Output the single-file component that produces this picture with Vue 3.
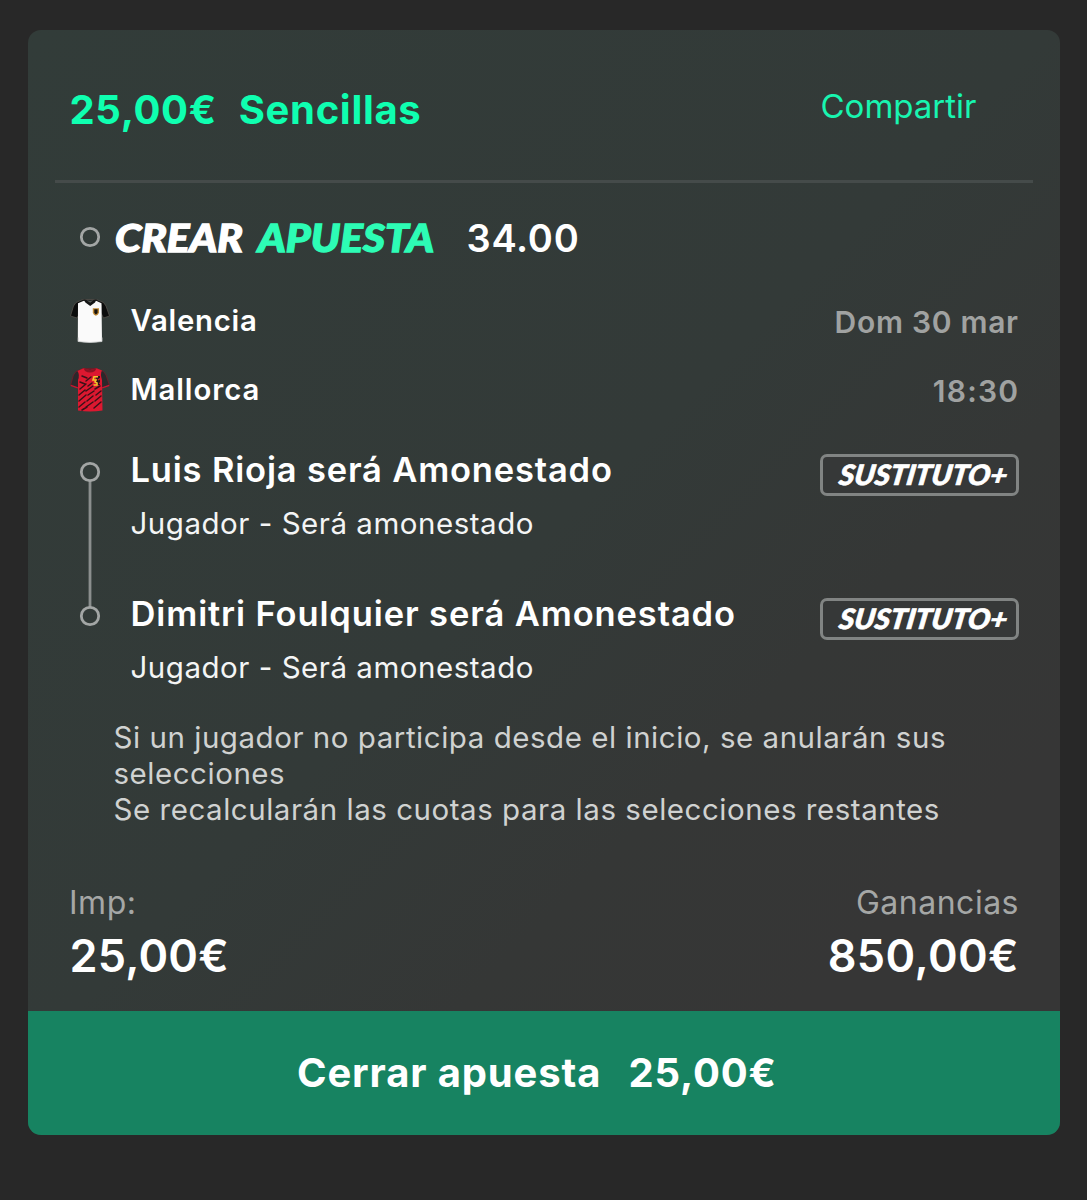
<script setup>
const teams = [
  { name: 'Valencia', kit: 'white', when: 'Dom 30 mar', nameGap: 0.75, whenGap: 0.7 },
  { name: 'Mallorca', kit: 'red', when: '18:30', nameGap: 0.95, whenGap: 1.2 },
]
const legs = [
  { title: 'Luis Rioja será Amonestado', market: 'Jugador - Será amonestado', gap: 0.82 },
  { title: 'Dimitri Foulquier será Amonestado', market: 'Jugador - Será amonestado', gap: 0.88 },
]
</script>

<template>
  <main class="page">
    <article class="card">
      <header class="head">
        <span class="stake">25,00€</span>
        <span class="type">Sencillas</span>
        <a class="share">Compartir</a>
      </header>
      <div class="rule"></div>

      <div class="builder">
        <svg class="ring" width="22" height="22" viewBox="0 0 22 22"><circle cx="11" cy="11" r="8.7" /></svg>
        <svg class="logo" width="324" height="40" viewBox="0 0 324 40">
          <text x="1" y="33.500" textLength="128" lengthAdjust="spacingAndGlyphs" fill="#fff" stroke="#fff">CREAR</text>
          <text x="144" y="33.500" textLength="176" lengthAdjust="spacingAndGlyphs" fill="#2dfcb5" stroke="#2dfcb5">APUESTA</text>
        </svg>
        <span class="odds">34.00</span>
      </div>

      <div v-for="t in teams" :key="t.name" class="team">
        <svg v-if="t.kit === 'white'" class="kit" width="40" height="46" viewBox="0 0 40 46">
          <path d="M13 1.500 6 4.500 3.500 8 .5 18l6.500 2 3-5V7h21v8l2.500 5 6-2L36 8l-2.500-3.500L26.500 1.500Z" fill="#0b0c0c" stroke="#5c5650" stroke-width=".7" />
          <path d="M14.500 2.500 8 5.200 7.800 43.500Q20 45.500 32 43.500L31.500 5.200 25.500 2.500 20 7Z" fill="#fafafa" />
          <path d="M8.300 39.500v4Q20 45.500 32 43.500v-4" fill="none" stroke="#cfd1d0" stroke-width=".8" />
          <path d="M13.300 1.200Q20 3 26.700 1.200L25 4.500 20.200 8 15.400 4.500Z" fill="#151616" />
          <path d="M16.500 2.300Q20 3.200 23.500 2.300L20.200 4.800Z" fill="#555957" />
          <path d="M22.800 10.300h6.200v4.400q-.8 2.300-3.100 3.100-2.300-.8-3.100-3.100Z" fill="#c08a36" />
          <path d="M24.300 11.300h3.300v3.600l-1.700 1.500-1.600-1.500Z" fill="#18130d" />
        </svg>
        <svg v-else class="kit" width="40" height="46" viewBox="0 0 40 46">
          <path d="M13 1.500 6 4.500 3.500 8 .5 18.500l7.500 2.500 2-5V7h20v9l2 5 7.500-2.500L36 8l-2.500-3.500-7-3Z" fill="#2b282b" stroke="#7d1826" stroke-width=".7" />
          <path d="M.8 18.300 7.800 20.800M32.200 20.800l7-2.500" stroke="#c41730" stroke-width="1.300" />
          <path d="M13.500 1.300Q20 4 26.500 1.300L32 3.600Q30 7 32 13L32.500 43.500Q20 45.500 8 43.500L8 13Q10 8 7.500 4Z" fill="#dc1830" />
          <path d="M13.500 1.300Q20 4 26.500 1.300L25 4Q20 7 15 4Z" fill="#8d1222" />
          <g fill="none" stroke="#3a1118" stroke-width="1.500" stroke-linecap="round">
            <path d="M12 9l5 2M16 14l5-4M10 15l5 2M10 22l6-5M18 19l4-3M16 24l7-5M25 22l5-3M9 28l6-5M18 28l6-4M26 28l5-4M9 34l7-6M17 34l6-5M25 34l6-5M9 40l6-5M16 40l7-5M24 41l7-6M12 43l5-3" />
          </g>
          <path d="M26 9h4v9h-3.500Z" fill="#281719" />
          <path d="M28 9.800h-4l-1 3.200h3l-1 2 2 1v2h-3.500" fill="none" stroke="#f5c528" stroke-width="1.600" />
          <path d="m28 13 3-2M29 16l2 1" stroke="#d91531" stroke-width="1.300" />
        </svg>
        <span class="name" :style="{ letterSpacing: t.nameGap + 'px' }">{{ t.name }}</span>
        <span class="when" :style="{ letterSpacing: t.whenGap + 'px', marginRight: -t.whenGap + 'px' }">{{ t.when }}</span>
      </div>

      <section class="legs">
        <svg class="rail" width="22" height="166" viewBox="0 0 22 166">
          <path d="M11 19.500V146.500" />
          <circle cx="11" cy="11" r="8.700" />
          <circle cx="11" cy="155" r="8.700" />
        </svg>
        <div class="list">
          <div v-for="leg in legs" :key="leg.title" class="leg">
            <div>
              <div class="title" :style="{ letterSpacing: leg.gap + 'px' }">{{ leg.title }}</div>
              <div class="market">{{ leg.market }}</div>
            </div>
            <div class="badge">
              <svg width="193" height="36" viewBox="0 0 193 36">
                <text transform="translate(15 27.500) skewX(-9)" textLength="168" lengthAdjust="spacingAndGlyphs">SUSTITUTO+</text>
              </svg>
            </div>
          </div>
        </div>
      </section>

      <p class="notes">
        Si un jugador no participa desde el inicio, se anularán sus selecciones<br />
        Se recalcularán las cuotas para las selecciones restantes
      </p>

      <section class="totals">
        <div class="left">
          <div class="label">Imp:</div>
          <div class="amount">25,00€</div>
        </div>
        <div class="right">
          <div class="label">Ganancias</div>
          <div class="amount win">850,00€</div>
        </div>
      </section>

      <button class="cashout"><span class="action">Cerrar apuesta</span><span class="value">25,00€</span></button>
    </article>
  </main>
</template>

<style>
body { margin: 0; background: #282828; }
</style>

<style scoped>
.page {
  box-sizing: border-box;
  width: 1087px;
  height: 1200px;
  padding: 30px 27px 0 28px;
  background: #282828;
  font-family: Inter, 'Liberation Sans', sans-serif;
  color: #fff;
}
.card {
  display: flex;
  flex-direction: column;
  height: 1105px;
  border-radius: 13px;
  overflow: hidden;
  background: linear-gradient(135deg, #323c39 0%, #333a38 48%, #353736 66%, #363636 82%);
}
.head {
  display: flex;
  height: 150px;
  padding: 0 83.500px 0 41.500px;
  color: #0fffb0;
  font-size: 40px;
  font-weight: 650;
  line-height: 160px;
}
.stake { width: 147.300px; letter-spacing: .65px; margin-right: 21.900px; }
.type { letter-spacing: .68px; }
.share { margin-left: auto; font-size: 33px; font-weight: 400; line-height: 153px; color: #18f5b0; }
.rule { height: 3px; margin: 0 27px; background: #454b4a; }

.builder {
  display: flex;
  align-items: center;
  box-sizing: border-box;
  height: 103px;
  padding: 7px 0 0 51px;
}
circle, .rail path { fill: none; stroke: #a3a6a5; stroke-width: 2.800; }
.rail path { stroke: #8b8f8e; }
.ring { margin-top: -3px; }
.logo { margin-left: 13px; font: italic 900 38.500px Lato, sans-serif; stroke-width: 1.300px; overflow: visible; }
.odds { margin-left: 28.500px; font-size: 38px; font-weight: 570; letter-spacing: .7px; }

.team {
  display: flex;
  align-items: center;
  height: 69px;
  padding: 0 42px;
}
.kit { flex: none; }
.name { margin-left: 20.500px; font-size: 29.300px; font-weight: 570; }
.when { margin-left: auto; padding-top: 2px; font-size: 30px; font-weight: 600; color: #a0a2a1; }

.legs { display: flex; padding: 23px 41px 0 51px; }
.rail { flex: none; margin-top: 14px; }
.list { flex: 1; margin-left: 29.500px; }
.leg { display: flex; justify-content: space-between; height: 144px; }
.leg:last-child { height: 121px; }
.title { font-size: 34.500px; font-weight: 620; line-height: 46px; white-space: nowrap; }
.market { margin-top: 8px; font-size: 29.500px; line-height: 45px; letter-spacing: .52px; color: #f4f5f5; white-space: nowrap; }
.badge {
  box-sizing: border-box;
  width: 199px;
  height: 42px;
  margin-top: 7px;
  border: 3px solid #818483;
  border-radius: 7px;
  background: #363838;
}
.badge svg { display: block; font: italic 900 28px Lato, sans-serif; fill: #fff; stroke: #fff; stroke-width: .7px; }

.notes {
  width: 860px;
  margin: 7px 0 0 85.500px;
  font-size: 29.500px;
  line-height: 36px;
  letter-spacing: .53px;
  color: #d0d2d1;
}
.totals { display: flex; justify-content: space-between; margin-top: 56px; padding: 0 41px 0 41.500px; }
.left .label { margin-left: -.5px; }
.right { text-align: right; }
.label { font-size: 32px; line-height: 40px; letter-spacing: .5px; color: #a5a7a6; }
.amount { font-size: 45px; font-weight: 600; line-height: 66px; letter-spacing: .2px; }
.win { letter-spacing: .4px; }
.cashout {
  display: flex;
  align-items: center;
  height: 124px;
  margin-top: auto;
  border: 0;
  padding: 0 0 2px 269px;
  background: #178361;
  color: #fff;
  font: 650 40px Inter, sans-serif;
}
.action { width: 305px; text-align: left; letter-spacing: .85px; }
.value { margin-left: 26.500px; letter-spacing: .8px; }
</style>
